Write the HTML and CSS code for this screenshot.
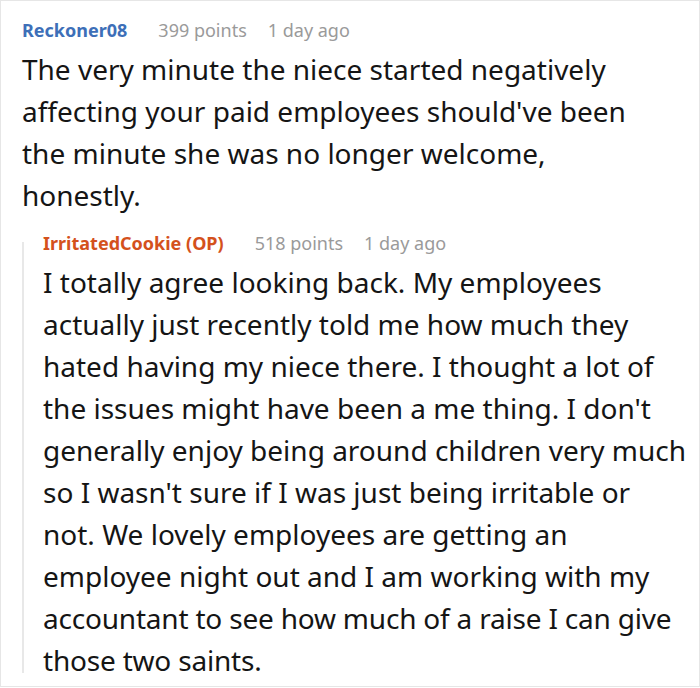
FILE: index.html
```html
<!DOCTYPE html>
<html>
<head>
<meta charset="utf-8">
<link rel="stylesheet" href="styles.css">
</head>
<body>
<div class="card">
  <div class="comment">
    <div class="meta">
      <span class="author">Reckoner08</span>
      <span class="info">399 points</span>
      <span class="info">1 day ago</span>
    </div>
    <p class="body">The very minute the niece started negatively<br>affecting your paid employees should've been<br>the minute she was no longer welcome,<br>honestly.</p>
  </div>
  <div class="reply">
    <div class="meta">
      <span class="author op">IrritatedCookie (OP)</span>
      <span class="info">518 points</span>
      <span class="info">1 day ago</span>
    </div>
    <p class="body">I totally agree looking back. My employees<br>actually just recently told me how much they<br>hated having my niece there. I thought a lot of<br>the issues might have been a me thing. I don't<br>generally enjoy being around children very much<br>so I wasn't sure if I was just being irritable or<br>not. We lovely employees are getting an<br>employee night out and I am working with my<br><span class="tight">accountant to see how much of a raise I can give</span><br><span class="tight">those two saints.</span></p>
  </div>
</div>
</body>
</html>
```

FILE: styles.css
```css
html, body {
  margin: 0;
  padding: 0;
  background: #ffffff;
}
.card {
  width: 700px;
  height: 687px;
  box-sizing: border-box;
  border: 1px solid #e6e6e6;
  padding: 17px 0 0 21px;
  font-family: "Noto Sans", "Open Sans", sans-serif;
  color: #151515;
}
.meta {
  display: flex;
  gap: 21px;
  font-size: 18px;
  line-height: 24px;
  height: 24px;
}
.author {
  font-weight: 700;
  color: #3d6fb8;
  margin-right: 10px;
}
.author.op {
  color: #d4511c;
}
.info {
  color: #9a9a9a;
}
.body {
  margin: 6px 0 0 0;
  font-size: 28px;
  line-height: 42px;
  white-space: nowrap;
}
.tight {
  letter-spacing: -0.2px;
}
.reply {
  position: relative;
  margin-top: 15px;
  padding-left: 21px;
  width: 640px;
}
.reply::before {
  content: "";
  position: absolute;
  left: 0;
  top: 11px;
  bottom: 8px;
  width: 2px;
  background: #e8e8e8;
}
```
